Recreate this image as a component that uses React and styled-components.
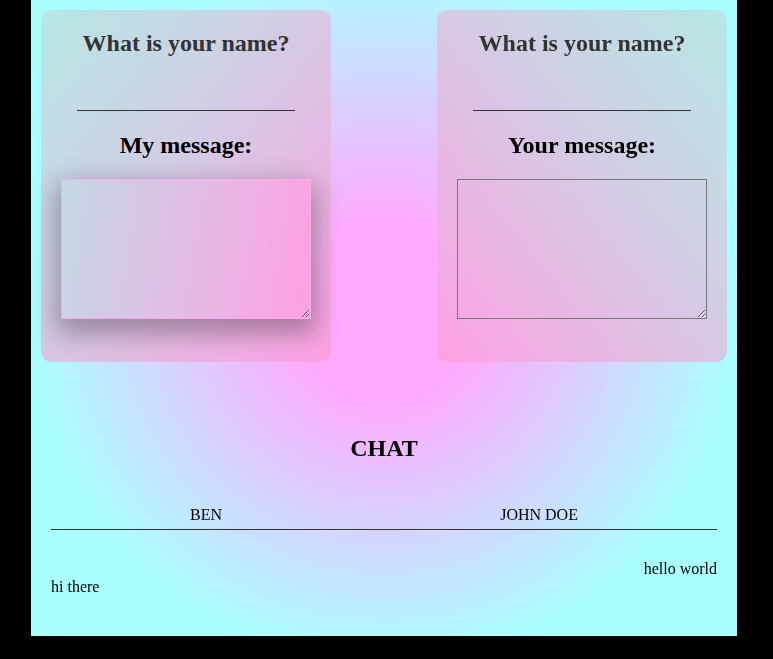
import React from "react";
import styled, { createGlobalStyle } from "styled-components";

const GlobalStyle = createGlobalStyle`
  html, body {
    margin: 0;
    background: #000;
    font-family: "Liberation Serif", "Times New Roman", serif;
  }
`;

const Page = styled.div`
  width: 706px;
  height: 636px;
  margin-left: 31px;
  box-sizing: border-box;
  padding: 10px 10px 0;
  background: radial-gradient(circle at 353px 310px, #ffaaff 90px, #aaffff 355px);
  overflow: hidden;
`;

const Cards = styled.div`
  display: flex;
  justify-content: space-between;
`;

const Card = styled.div`
  width: 290px;
  height: 352px;
  border-radius: 10px;
  text-align: center;
  background: linear-gradient(
    ${(p) => (p.$flip ? "to bottom left" : "to bottom right")},
    #b6e8e6 0%,
    #d4cce4 45%,
    #ffa0e4 100%
  );
`;

const Question = styled.h2`
  font-size: 24px;
  margin: 20px 0;
  color: #333;
`;

const Label = styled(Question)`
  margin-top: 21px;
  color: #000;
`;

const NameInput = styled.input`
  display: block;
  box-sizing: border-box;
  width: 218px;
  height: 34px;
  margin: 0 auto;
  border: none;
  border-bottom: 1px solid #333;
  background: transparent;
  outline: none;
  font: 16px "Liberation Serif", serif;
`;

const Message = styled.textarea`
  display: block;
  box-sizing: border-box;
  width: 250px;
  height: 140px;
  margin: 0 auto;
  padding: 28px 15px 10px;
  font: 16px "Liberation Serif", serif;
  outline: none;
  border: 1px solid ${(p) => (p.$active ? "#ffa8f2" : "#777")};
  background: ${(p) =>
    p.$active
      ? "linear-gradient(100deg, #c4d8e4 0%, #e2bce6 50%, #ffa0e2 100%)"
      : "transparent"};
  box-shadow: ${(p) => (p.$active ? "0 10px 24px 5px rgba(0, 0, 0, 0.3)" : "none")};
`;

const Chat = styled.section`
  padding: 0 10px;
  margin-top: 73px;
`;

const ChatTitle = styled.h2`
  font-size: 24px;
  text-align: center;
  margin: 0 0 44px;
`;

const People = styled.div`
  display: flex;
  justify-content: space-around;
  font-size: 16px;
  line-height: 18px;
  padding-bottom: 5px;
  border-bottom: 1px solid #333;
`;

const Lines = styled.div`
  display: flex;
  flex-direction: column;
  margin-top: 30px;
  font-size: 16px;
  line-height: 18px;
`;

const Line = styled.div`
  text-align: ${(p) => (p.$mine ? "left" : "right")};
`;

const Panel = ({ flip, label, active }) => (
  <Card $flip={flip}>
    <Question>What is your name?</Question>
    <NameInput type="text" />
    <Label>{label}</Label>
    <Message $active={active} autoFocus={active} />
  </Card>
);

export default function App() {
  return (
    <>
      <GlobalStyle />
      <Page>
        <Cards>
          <Panel label="My message:" active />
          <Panel flip label="Your message:" />
        </Cards>
        <Chat>
          <ChatTitle>CHAT</ChatTitle>
          <People>
            <span>BEN</span>
            <span>JOHN DOE</span>
          </People>
          <Lines>
            <Line>hello world</Line>
            <Line $mine>hi there</Line>
          </Lines>
        </Chat>
      </Page>
    </>
  );
}
